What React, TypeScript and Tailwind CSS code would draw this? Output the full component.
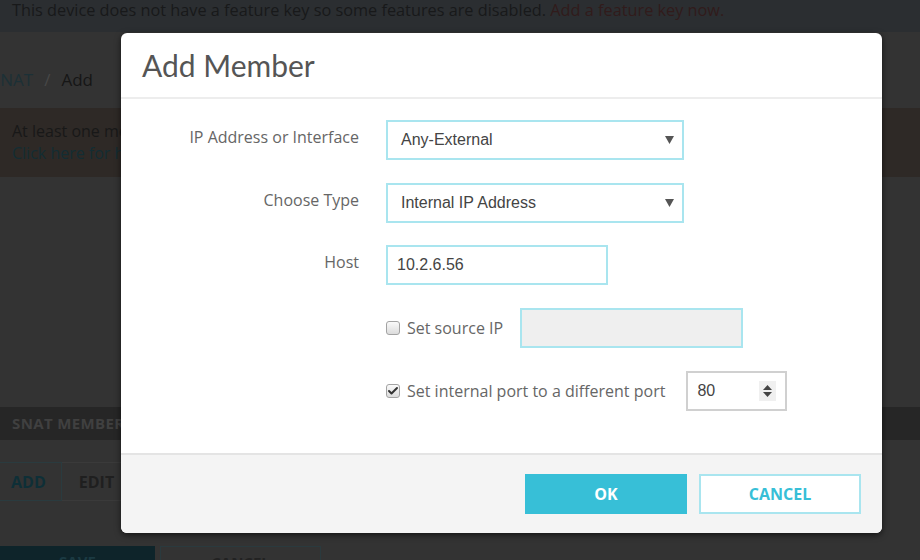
import { Check } from "lucide-react";

const LABEL = "font-['Open_Sans',sans-serif] text-[16px] leading-[22px] text-[#666]";
const FIELD =
  "h-[40px] border-2 border-[#a9e5ef] bg-white flex items-center font-['Liberation_Sans',Arial,sans-serif] text-[16px] text-[#444]";

function Caret() {
  return (
    <svg width="9" height="8" viewBox="0 0 9 8" className="shrink-0">
      <path d="M0 0h9L4.5 8z" fill="#555" />
    </svg>
  );
}

function Box({ checked }: { checked?: boolean }) {
  return (
    <span className="relative flex h-[14px] w-[14px] shrink-0 items-center justify-center rounded-[3px] border border-[#a3a3a3] bg-gradient-to-b from-[#fafafa] to-[#dcdcdc]">
      {checked && <Check className="h-[12px] w-[12px] text-[#333]" strokeWidth={4} />}
    </span>
  );
}

function Backdrop() {
  return (
    <div className="flex flex-col font-['Open_Sans',sans-serif]">
      <div className="h-[32px] shrink-0 bg-[#2b2e31] px-3 text-[16.3px] leading-[20px] text-[#18191a]">
        This device does not have a feature key so some features are disabled.{" "}
        <span className="text-[#311b1b]">Add a feature key now.</span>
      </div>
      <div className="flex h-[76px] shrink-0 items-end pb-[17px] text-[17px] leading-[22px]">
        <span className="-ml-[9px] text-[#1c3036]">SNAT</span>
        <span className="mx-[11px] text-[#474747]">/</span>
        <span className="text-[#161616]">Add</span>
      </div>
      <div className="h-[69px] shrink-0 bg-[#2e2926] pl-3 pt-[12px] text-[16px] leading-[22px]">
        <div className="w-[109px] overflow-hidden whitespace-nowrap">
          <div className="text-[#181818]">At least one member is required.</div>
          <div className="text-[#132d33]">Click here for help.</div>
        </div>
      </div>
      <div className="h-[230px] shrink-0" />
      <div className="flex h-[33px] shrink-0 items-center bg-[#262626] px-3 text-[15px] font-bold tracking-wide text-[#404040]">
        SNAT MEMBERS
      </div>
      <div className="h-[22px] shrink-0" />
      <div className="flex h-[39px] shrink-0">
        <div className="flex w-[62px] items-center border-y border-r border-[#2a3b3f] pl-[11px] text-[16px] font-bold text-[#0e2f37]">
          ADD
        </div>
        <div className="flex w-[70px] items-center justify-center border-y border-r border-[#3a3a3a] text-[16px] font-bold text-[#1f1f1f]">
          EDIT
        </div>
      </div>
      <div className="h-[45px] shrink-0" />
      <div className="flex shrink-0 gap-[5px]">
        <div className="flex h-[40px] w-[155px] items-start justify-center bg-[#0e242a] pt-[4px] text-[15px] font-bold text-[#1b3a42]">
          SAVE
        </div>
        <div className="flex h-[40px] w-[161px] items-start justify-center border border-[#2a3a3e] pt-[4px] text-[15px] font-bold text-[#222]">
          CANCEL
        </div>
      </div>
    </div>
  );
}

export default function App() {
  return (
    <div className="relative h-[560px] w-[920px] overflow-hidden bg-[#333333]">
      <Backdrop />

      <div className="absolute left-[121px] top-[33px] flex h-[500px] w-[761px] flex-col overflow-hidden rounded-[6px] bg-white shadow-[0_2px_6px_rgba(0,0,0,0.6)]">
        <div className="flex h-[66px] shrink-0 items-center border-b-2 border-[#ededed] px-[21px] font-['Lato',sans-serif] text-[30px] text-[#555]">
          Add Member
        </div>

        <div className="flex flex-1 flex-col pt-[21px]">
          <div className="flex items-start">
            <div className={`w-[238px] pt-[6px] text-right ${LABEL}`}>IP Address or Interface</div>
            <div className={`ml-[27px] w-[298px] justify-between pl-[13px] pr-[8px] ${FIELD}`}>
              <span>Any-External</span>
              <Caret />
            </div>
          </div>

          <div className="mt-[23px] flex items-start">
            <div className={`w-[238px] pt-[6px] text-right ${LABEL}`}>Choose Type</div>
            <div className={`ml-[27px] w-[298px] justify-between pl-[13px] pr-[8px] ${FIELD}`}>
              <span>Internal IP Address</span>
              <Caret />
            </div>
          </div>

          <div className="mt-[22px] flex items-start">
            <div className={`w-[238px] pt-[6px] text-right ${LABEL}`}>Host</div>
            <div className={`ml-[27px] w-[222px] pl-[9px] ${FIELD}`}>10.2.6.56</div>
          </div>

          <div className="ml-[265px] mt-[23px] flex items-center">
            <Box />
            <span className={`ml-[7px] ${LABEL}`}>Set source IP</span>
            <div className="ml-[17px] h-[40px] w-[223px] border-2 border-[#a9e5ef] bg-[#efefef]" />
          </div>

          <div className="ml-[265px] mt-[23px] flex items-center">
            <Box checked />
            <span className={`ml-[7px] ${LABEL}`}>Set internal port to a different port</span>
            <div className="ml-[21px] flex h-[40px] w-[101px] items-center justify-between border-2 border-[#d0d0d0] bg-white pl-[9px] pr-[9px] font-['Liberation_Sans',Arial,sans-serif] text-[16px] text-[#444]">
              <span>80</span>
              <span className="flex h-[20px] w-[17px] flex-col items-center justify-center gap-[2px] bg-[#f0f0f0]">
                <svg width="9" height="5" viewBox="0 0 9 5">
                  <path d="M0 5h9L4.5 0z" fill="#444" />
                </svg>
                <svg width="9" height="5" viewBox="0 0 9 5">
                  <path d="M0 0h9L4.5 5z" fill="#444" />
                </svg>
              </span>
            </div>
          </div>
        </div>

        <div className="flex h-[80px] shrink-0 items-center justify-end gap-[12px] border-t-2 border-[#e4e4e4] bg-[#f4f4f4] pr-[21px] font-['Open_Sans',sans-serif] text-[16px] font-bold">
          <button className="h-[40px] w-[162px] bg-[#37bfd7] text-white">OK</button>
          <button className="h-[40px] w-[162px] border-2 border-[#a9e5ef] bg-white text-[#37bfd7]">CANCEL</button>
        </div>
      </div>
    </div>
  );
}
